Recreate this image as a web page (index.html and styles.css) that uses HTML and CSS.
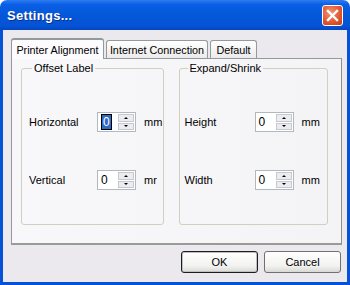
FILE: index.html
```html
<!DOCTYPE html>
<html lang="en">
<head>
  <meta charset="UTF-8">
  <title>Settings...</title>
  <link rel="stylesheet" href="styles.css">
</head>
<body>
<div class="window">
  <div class="titlebar">
    <span class="title">Settings...</span>
    <span class="close-btn">
      <svg width="13" height="13" viewBox="0 0 13 13"><path d="M2 2 L11 11 M11 2 L2 11" stroke="#fff" stroke-width="2.4" stroke-linecap="square"/></svg>
    </span>
  </div>
  <div class="frame">
    <div class="tabs">
      <div class="tab active tab-printer">Printer Alignment</div>
      <div class="tab tab-internet">Internet Connection</div>
      <div class="tab tab-default">Default</div>
    </div>
    <div class="panel">
      <fieldset class="group left">
        <legend>Offset Label</legend>
        <div class="row">
          <span class="label">Horizontal</span>
          <div class="spin"><span class="value"><span class="sel">0</span></span><span class="arrows"><span class="up"></span><span class="down"></span></span></div>
          <span class="unit">mm</span>
        </div>
        <div class="row">
          <span class="label">Vertical</span>
          <div class="spin"><span class="value">0</span><span class="arrows"><span class="up"></span><span class="down"></span></span></div>
          <span class="unit">mr</span>
        </div>
      </fieldset>
      <fieldset class="group right">
        <legend>Expand/Shrink</legend>
        <div class="row">
          <span class="label">Height</span>
          <div class="spin"><span class="value">0</span><span class="arrows"><span class="up"></span><span class="down"></span></span></div>
          <span class="unit">mm</span>
        </div>
        <div class="row">
          <span class="label">Width</span>
          <div class="spin"><span class="value">0</span><span class="arrows"><span class="up"></span><span class="down"></span></span></div>
          <span class="unit">mm</span>
        </div>
      </fieldset>
    </div>
    <div class="buttons">
      <button class="btn default">OK</button>
      <button class="btn">Cancel</button>
    </div>
  </div>
</div>
</body>
</html>
```

FILE: styles.css
```css
body {
  margin: 0;
  font-family: "Liberation Sans", Arial, sans-serif;
  font-size: 11px;
  color: #000;
  background: #fff;
}
.window {
  width: 350px;
  height: 285px;
  display: flex;
  flex-direction: column;
}
.titlebar {
  height: 30px;
  flex: none;
  display: flex;
  align-items: center;
  justify-content: space-between;
  padding: 0 7px 0 7px;
  border-radius: 7px 7px 0 0;
  background: linear-gradient(#2f7cf0 0%, #0a5fe6 15%, #0457d8 50%, #0553d6 85%, #0346c2 100%);
}
.title {
  color: #fff;
  font-family: "Liberation Sans", Arial, sans-serif;
  font-weight: bold;
  font-size: 13px;
  text-shadow: 1px 1px 0 #0c2f8a;
  letter-spacing: 0.3px;
}
.close-btn {
  width: 21px;
  height: 21px;
  border: 1px solid #fff;
  border-radius: 3px;
  background: radial-gradient(circle at 40% 35%, #f39477, #e0552c 60%, #c43a12);
  display: flex;
  align-items: center;
  justify-content: center;
  box-sizing: border-box;
}
.frame {
  flex: 1;
  background: #ebe9ed;
  border: 3px solid #0552d8;
  border-top: none;
  padding: 8px 6px 0 8px;
  display: flex;
  flex-direction: column;
}
.tabs {
  display: flex;
  align-items: flex-end;
  height: 20px;
  font-size: 10.8px;
}
.tab {
  height: 18px;
  box-sizing: border-box;
  display: flex;
  align-items: center;
  justify-content: center;
  border: 1px solid #919b9c;
  border-bottom: none;
  border-radius: 3px 3px 0 0;
  background: linear-gradient(#fff, #eceaea);
  margin-right: 2px;
  padding-top: 1px;
}
.tab.active {
  height: 21px;
  background: #fcfcfe;
  border-top: 2px solid #919b9c;
  position: relative;
  z-index: 1;
  margin-bottom: -1px;
}
.tab-printer { width: 93px; }
.tab-internet { width: 102px; }
.tab-default { width: 47px; }
.panel {
  border: 1px solid #919b9c;
  border-right-color: #8e8e8c;
  border-bottom: 2px solid #9a9a98;
  background: linear-gradient(90deg, #f8f8fa, #f4f3f5);
  display: flex;
  gap: 15px;
  padding: 3px 13px 0 9px;
  box-sizing: border-box;
  width: 331px;
  height: 187px;
}
.group {
  margin: 0;
  border: 1px solid #d0d0bf;
  border-radius: 3px;
  height: 163px;
  box-sizing: border-box;
  display: flex;
  flex-direction: column;
  gap: 38px;
  padding: 38px 0 0 7px;
}
.group legend {
  padding: 0 2px;
  margin-left: 3px;
  color: #000;
}
.group.left { width: 143px; }
.group.right { width: 150px; padding-left: 5px; }
.row {
  display: flex;
  align-items: center;
  height: 20px;
}
.group.left .label { width: 68px; }
.group.right .label { width: 70px; }
.spin {
  width: 39px;
  height: 20px;
  box-sizing: border-box;
  border: 1px solid #b0b8c0;
  background: #fff;
  display: flex;
}
.value {
  flex: 1;
  padding: 2px 0 0 3px;
  font-size: 12px;
}
.sel {
  background: #316ac5;
  color: #fff;
  border: 1px solid #000;
  padding: 0 1px;
}
.arrows {
  width: 16px;
  display: flex;
  flex-direction: column;
  gap: 1px;
  padding: 1px;
}
.arrows span {
  flex: 1;
  background: #ecebef;
  border: 1px solid #c8c8d0;
  display: flex;
  align-items: center;
  justify-content: center;
}
.up::after {
  content: "";
  border: 2px solid transparent;
  border-bottom: 2px solid #000;
  border-top: none;
}
.down::after {
  content: "";
  border: 2px solid transparent;
  border-top: 2px solid #000;
  border-bottom: none;
}
.unit {
  margin-left: 8px;
}
.buttons {
  display: flex;
  justify-content: flex-end;
  gap: 6px;
  padding-top: 6px;
}
.btn {
  width: 77px;
  height: 22px;
  font-family: "Liberation Sans", Arial, sans-serif;
  font-size: 11px;
  border: 1px solid #707070;
  border-radius: 3px;
  background: linear-gradient(#fff, #f2f2f0 70%, #d8d8d4);
  padding: 0;
}
.btn.default {
  border: 1px solid #1c1c1c;
  box-shadow: inset 0 0 0 1px #c0c0c0;
}
```
